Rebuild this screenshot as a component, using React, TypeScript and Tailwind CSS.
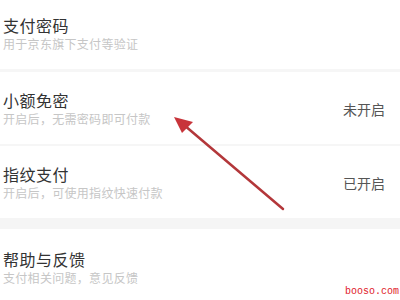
import React from 'react';

interface Row {
  title: string;
  desc: string;
  status?: string;
}

const rows: Row[] = [
  { title: '支付密码', desc: '用于京东旗下支付等验证' },
  { title: '小额免密', desc: '开启后，无需密码即可付款', status: '未开启' },
  { title: '指纹支付', desc: '开启后，可使用指纹快速付款', status: '已开启' },
];

const font = { fontFamily: '"Noto Sans CJK SC", "Noto Sans", sans-serif' };

const SettingRow: React.FC<{ row: Row }> = ({ row }) => (
  <div className="flex items-center justify-between pl-[3px] pr-[15px] h-[72px]">
    <div className="flex flex-col">
      <span className="text-[16px] leading-[20px] text-[#333333] tracking-[0.5px]">{row.title}</span>
      <span className="text-[12px] leading-[16px] mt-[1px] text-[#c6c6c6] tracking-[0.3px]">{row.desc}</span>
    </div>
    {row.status && <span className="text-[14px] text-[#555555] mt-[2px]">{row.status}</span>}
  </div>
);

const App: React.FC = () => {
  return (
    <div className="relative w-[400px] h-[300px] bg-white overflow-hidden" style={font}>
      <div className="flex flex-col">
        <div className="flex flex-col pl-[3px] pt-[15px] h-[69px]">
          <span className="text-[16px] leading-[20px] text-[#333333] tracking-[0.5px]">{rows[0].title}</span>
          <span className="text-[12px] leading-[16px] mt-[1px] text-[#c6c6c6] tracking-[0.3px]">{rows[0].desc}</span>
        </div>
        <div className="h-[3px] bg-[#f6f6f6]" />
        <SettingRow row={rows[1]} />
        <div className="h-[2px] bg-[#f6f6f6]" />
        <SettingRow row={rows[2]} />
        <div className="h-[11px] bg-[#f5f5f5]" />
        <div className="flex flex-col pl-[3px] pt-[20px]">
          <span className="text-[16px] leading-[20px] text-[#333333] tracking-[0.5px]">帮助与反馈</span>
          <span className="text-[12px] leading-[16px] mt-[1px] text-[#c6c6c6] tracking-[0.3px]">支付相关问题，意见反馈</span>
        </div>
      </div>

      <svg className="absolute left-0 top-0" width="400" height="300" viewBox="0 0 400 300">
        <line x1="283" y1="209" x2="184" y2="125" stroke="#b3373a" strokeWidth="2.5" strokeLinecap="round" />
        <polygon points="174,117 193,122 182,133" fill="#c8343a" />
      </svg>

      <span
        className="absolute right-[1px] bottom-[2px] text-[10px] leading-[12px] text-[#e0202a]"
        style={{ fontFamily: '"Liberation Mono", monospace' }}
      >
        booso.com
      </span>
    </div>
  );
};

export default App;
